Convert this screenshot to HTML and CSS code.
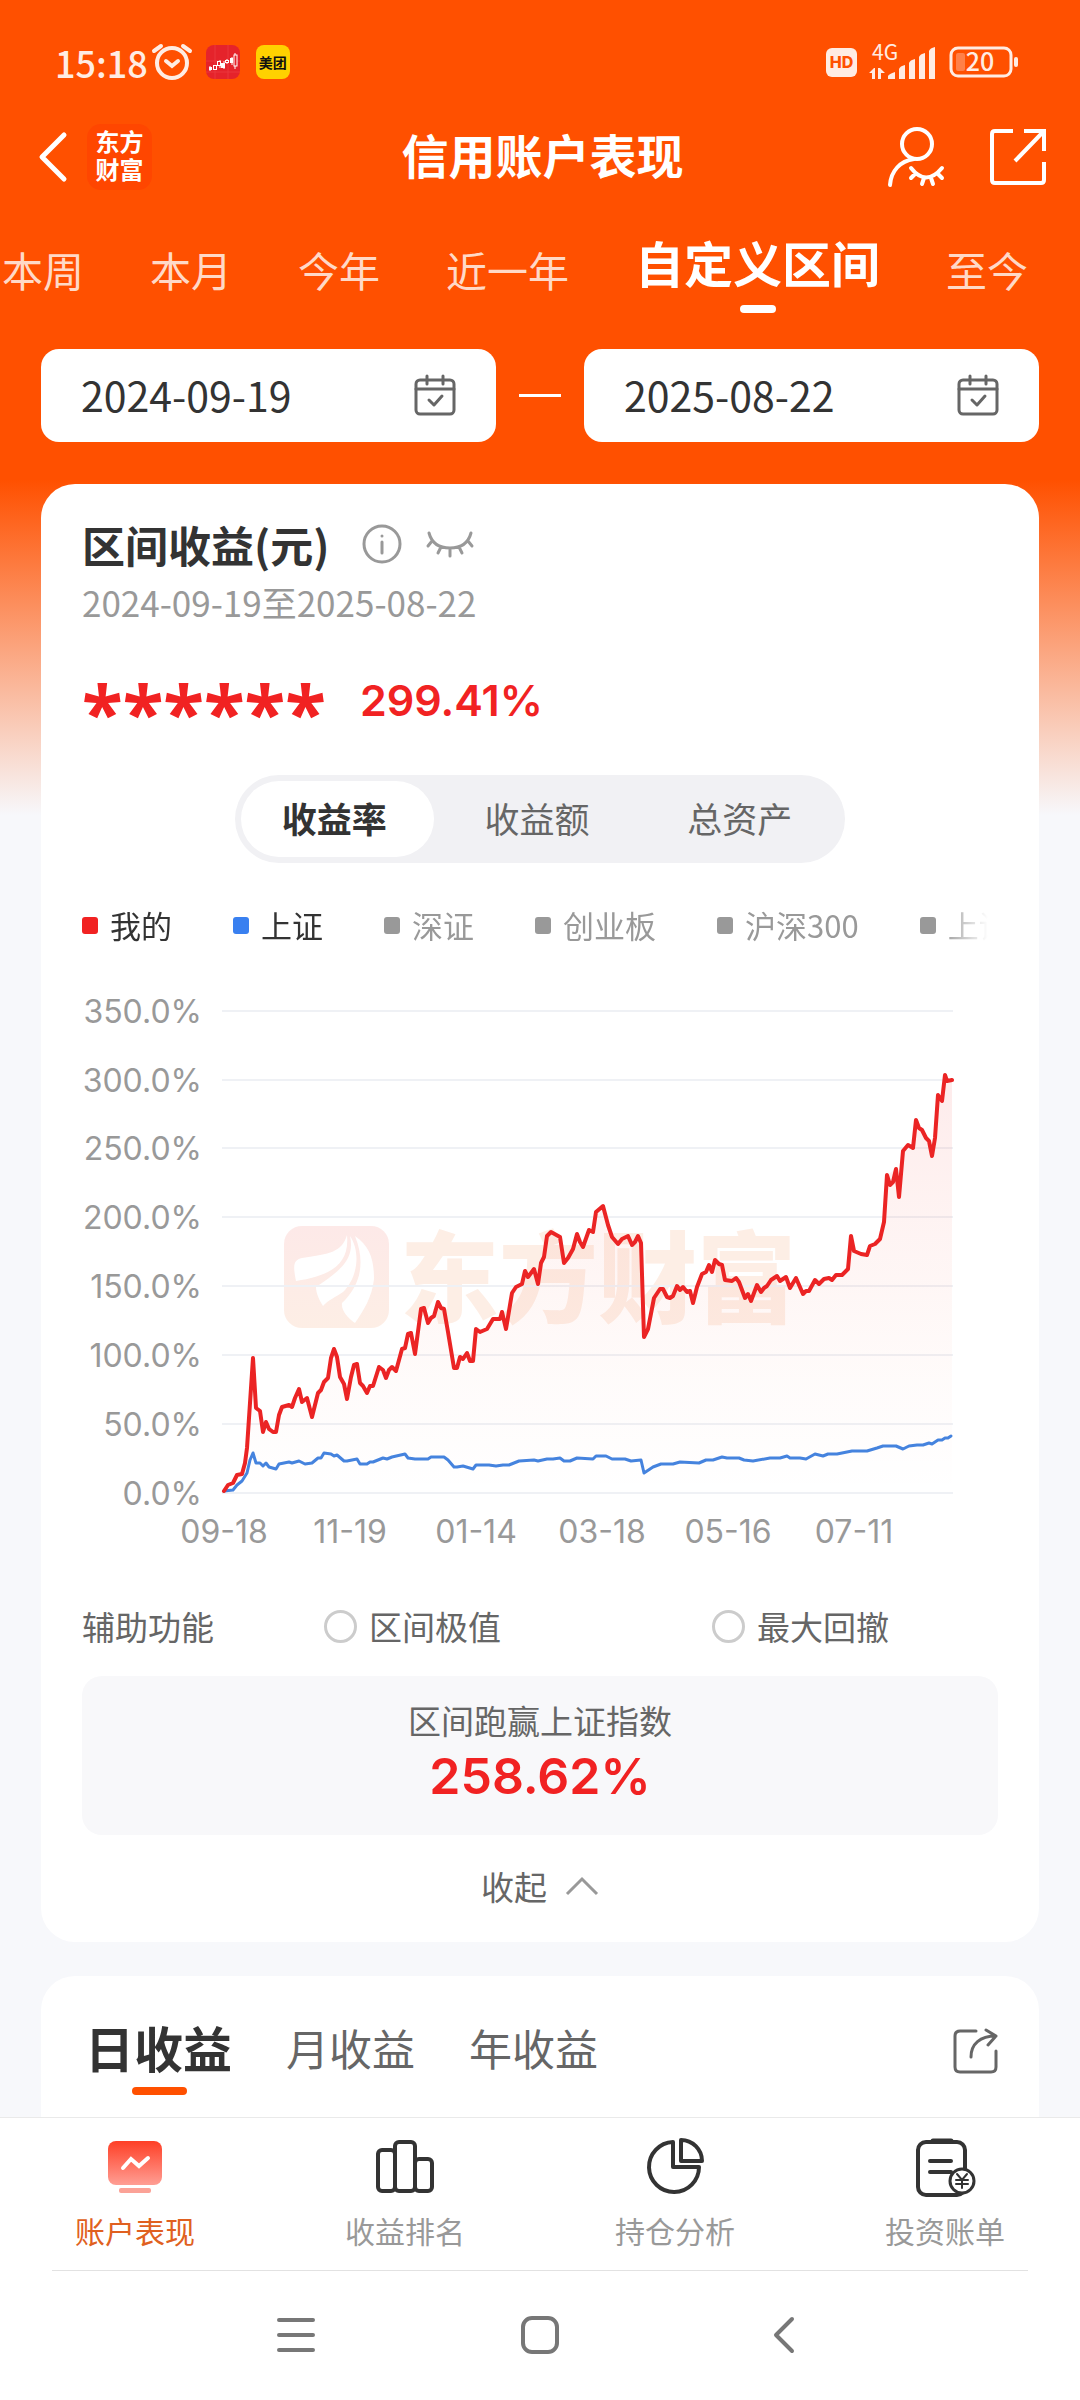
FILE: index.html
```html
<!DOCTYPE html>
<html lang="zh-CN">
<head>
<meta charset="utf-8">
<meta name="viewport" content="width=device-width, initial-scale=1">
<title>信用账户表现</title>
<link rel="stylesheet" href="styles.css">
</head>
<body>
<div class="page">
  <div class="status">
    <div class="status-group">
      <span class="clock">15:18</span>
      <svg class="alarm" width="40" height="38" viewBox="0 0 40 38" fill="none" stroke="#ffece3" stroke-width="4" stroke-linecap="round"><circle cx="20" cy="20" r="15"/><path d="M2 8l7-5M38 8l-7-5M14 18l6 5 6-5"/></svg>
      <svg class="app" width="34" height="34" viewBox="0 0 34 34"><rect width="34" height="34" rx="8" fill="#e5232b"/><path d="M9 0v34M22 0v34M0 16h34M0 27h34" stroke="#ef4a4e" stroke-width="1" opacity=".5"/><path d="M4 21v5M14 15v8M18 16v8M21 14v5M26 12v8M29 8v16" stroke="#fff"/><g fill="#fff"><rect x="3" y="22" width="3" height="3"/><rect x="15" y="18" width="4" height="5"/><rect x="24" y="13" width="3" height="5"/></g><g fill="#e5232b" stroke="#fff"><rect x="7.500" y="20.500" width="3" height="4"/><rect x="11.500" y="16.500" width="3" height="4"/><rect x="19.500" y="15.500" width="3" height="2"/><rect x="28" y="10" width="3" height="11"/></g></svg>
      <span class="meituan">美团</span>
    </div>
    <div class="status-group">
      <span class="hd">HD</span>
      <svg class="signal" width="66" height="38" viewBox="0 0 66 38" fill="#ffece3"><text x="3" y="17" class="signal-text">4G</text><path d="M0 30l5-5h1v11H3v-6zM9 36V25h2l5 5h-4v6z"/><path d="M19 33q1-2 7-4v7h-7zM30 26q1-3 6-4v14h-6zM40 20q1-3 6-4v20h-6zM50 14q1-3 6-4v26h-6zM60 8q1-3 6-4v32h-6z"/></svg>
      <svg class="battery" width="70" height="32" viewBox="0 0 70 32"><rect x="2" y="2" width="60" height="28" rx="7" fill="none" stroke="#ffece3" stroke-width="3"/><rect x="7" y="7" width="9" height="18" rx="2" fill="#ff8049"/><rect x="65" y="11" width="4" height="10" rx="2" fill="#ffece3"/><text x="31" y="25" text-anchor="middle" class="battery-text">20</text></svg>
    </div>
  </div>

  <header class="topbar">
    <div class="topbar-left">
      <button class="icon-btn" aria-label="返回"><svg width="30" height="52" viewBox="0 0 30 52" fill="none" stroke="#fff" stroke-width="5" stroke-linecap="round" stroke-linejoin="round"><path d="M26 4L4 26l22 22"/></svg></button>
      <span class="brand">东方<br>财富</span>
    </div>
    <h1 class="title">信用账户表现</h1>
    <div class="topbar-right">
      <button class="icon-btn" aria-label="账户"><svg width="60" height="60" viewBox="0 0 60 60" fill="none" stroke="#fff" stroke-width="4" stroke-linecap="round"><circle cx="31" cy="17" r="15"/><path d="M28 32C14 34 5 44 4 58"/><path d="M25 41q15 19 31 0M29 47l-4 4M38 51l-2 6M45 51l2 6M52 47l4 4" stroke-width="4"/></svg></button>
      <button class="icon-btn" aria-label="分享"><svg width="58" height="58" viewBox="0 0 58 58" fill="none" stroke="#fff" stroke-width="4"><path d="M24 3H6q-3 0-3 3v46q0 3 3 3h46q3 0 3-3V34"/><path d="M35 3h20v20M55 3L26 33"/></svg></button>
    </div>
  </header>

  <nav class="ranges" aria-label="区间">
    <button class="range">本周</button>
    <button class="range">本月</button>
    <button class="range">今年</button>
    <button class="range">近一年</button>
    <button class="range is-active">自定义区间</button>
    <button class="range">至今</button>
  </nav>

  <div class="dates">
    <label class="date"><input type="text" value="2024-09-19" readonly aria-label="开始日期"><svg width="42" height="42" viewBox="0 0 42 42" fill="none" stroke="#666" stroke-width="3" stroke-linecap="round" stroke-linejoin="round"><rect x="2" y="5" width="38" height="34" rx="4"/><path d="M2 14h38M13 1v8M29 1v8M15 25l5 5 8-9"/></svg></label>
    <span class="dates-dash"></span>
    <label class="date"><input type="text" value="2025-08-22" readonly aria-label="结束日期"><svg width="42" height="42" viewBox="0 0 42 42" fill="none" stroke="#666" stroke-width="3" stroke-linecap="round" stroke-linejoin="round"><rect x="2" y="5" width="38" height="34" rx="4"/><path d="M2 14h38M13 1v8M29 1v8M15 25l5 5 8-9"/></svg></label>
  </div>

  <main class="content">
    <section class="card">
      <div class="card-head">
        <h2 class="card-title">区间收益(元)</h2>
        <button class="icon-btn" aria-label="说明"><svg width="40" height="40" viewBox="0 0 40 40" fill="none" stroke="#999" stroke-width="3" stroke-linecap="round"><circle cx="20" cy="20" r="18"/><path d="M20 18v11M20 12v0"/></svg></button>
        <button class="icon-btn" aria-label="显示金额"><svg width="48" height="30" viewBox="0 0 48 30" fill="none" stroke="#999" stroke-width="3" stroke-linecap="round"><path d="M3 4q4 15 21 15T45 4M6 12l-4 5M42 12l4 5M15 18l-3 6M33 18l3 6M24 19v8"/></svg></button>
      </div>
      <p class="period">2024-09-19至2025-08-22</p>
      <div class="amount"><span class="masked">******</span><span class="rate">299.41%</span></div>

      <div class="switch">
        <button class="switch-item is-active">收益率</button>
        <button class="switch-item">收益额</button>
        <button class="switch-item">总资产</button>
      </div>

      <div class="legend">
        <button class="legend-item mine">我的</button>
        <button class="legend-item index">上证</button>
        <button class="legend-item">深证</button>
        <button class="legend-item">创业板</button>
        <button class="legend-item">沪深300</button>
        <button class="legend-item">上证50</button>
      </div>

      <svg class="chart" viewBox="0 0 916 560" role="img" aria-label="收益率走势">
        <defs>
          <linearGradient id="area" gradientUnits="userSpaceOnUse" x1="0" y1="85" x2="0" y2="503"><stop offset="0" stop-color="#f12222" stop-opacity=".09"/><stop offset=".75" stop-color="#f14422" stop-opacity=".02"/><stop offset="1" stop-color="#f12222" stop-opacity="0"/></linearGradient>
          <linearGradient id="mark" x1="0" y1="0" x2="0" y2="1"><stop offset="0" stop-color="#fde9e8"/><stop offset="1" stop-color="#fdeee5"/></linearGradient>
        </defs>
        <rect x="202" y="236" width="105" height="102" rx="18" fill="url(#mark)"/>
        <g fill="#fff"><path d="M265 245C260 262 248 264 220 268C211 270 211 276 214 291C246 286 268 276 265 245z"/><path d="M268 246C273 268 260 280 234 297C234 304 238 311 241 316C246 310 254 307 261 302C274 290 280 264 268 246z"/><path d="M273 246C288 256 292 270 292 289C290 308 281 321 273 333C266 328 259 321 260 313C276 298 285 276 273 246z"/></g>
        <text x="318" y="325" class="watermark">东方财富</text>
        <path class="grid" d="M140 21h731M140 90h731M140 158h731M140 227h731M140 296h731M140 365h731M140 434h731M140 503h731"/>
        <g class="axis" text-anchor="end"><text x="120" y="33">350.0%</text><text x="120" y="102">300.0%</text><text x="120" y="170">250.0%</text><text x="120" y="239">200.0%</text><text x="120" y="308">150.0%</text><text x="120" y="377">100.0%</text><text x="120" y="446">50.0%</text><text x="120" y="515">0.0%</text></g>
        <g class="axis" text-anchor="middle"><text x="142" y="553">09-18</text><text x="268" y="553">11-19</text><text x="394" y="553">01-14</text><text x="520" y="553">03-18</text><text x="646" y="553">05-16</text><text x="772" y="553">07-11</text></g>
        <path fill="url(#area)" d="M142 501L151 493L155 485L160 484L165 458L171 368L174 418L178 421L181 442L184 432L187 439L194 442L200 417L210 417L217 399L220 412L225 408L230 427L236 403L246 388L252 359L258 387L265 409L272 375L275 374L278 393L285 403L291 396L297 377L304 388L310 377L314 381L320 359L323 358L326 344L329 343L333 364L339 319L342 318L346 333L352 326L356 312L362 319L372 378L375 378L378 367L385 363L391 371L394 339L405 339L411 329L418 329L420 322L424 339L430 303L440 294L443 281L446 287L452 279L456 294L461 268L465 246L469 242L478 247L482 273L491 259L495 244L501 257L507 240L511 242L514 222L521 216L530 247L536 254L546 246L550 255L556 246L559 253L562 347L572 308L578 299L588 308L595 296L608 301L611 313L620 284L627 275L633 270L640 275L643 290L654 288L663 308L669 311L675 295L679 302L695 286L704 287L708 298L714 288L721 304L727 301L733 290L747 288L760 285L766 279L769 246L772 261L785 265L798 249L802 232L805 185L814 179L817 207L821 161L831 158L834 130L847 151L850 166L856 105L860 111L863 85L865 91L870 90V503H142z"/>
        <polyline class="line-index" points="142,501 151,500 155,495 160,491 165,483 168,470 171,463 174,473 178,473 181,476 184,473 187,477 194,479 197,474 207,472 210,473 217,471 223,474 230,473 236,468 239,468 242,463 249,464 252,466 255,465 262,471 265,471 275,469 278,474 285,474 288,472 291,472 301,468 305,469 310,467 323,464 326,468 333,469 346,469 349,467 362,467 366,470 372,477 375,477 381,476 391,479 394,475 407,475 414,476 421,475 427,475 437,471 452,470 456,471 465,469 471,469 478,468 482,471 488,471 495,468 511,469 514,466 524,466 530,469 543,469 549,471 559,470 562,483 571,477 579,474 591,474 598,472 617,473 624,470 631,470 640,467 645,468 657,468 662,470 671,471 688,468 698,468 705,466 708,468 718,468 724,469 733,464 741,466 746,464 755,464 770,461 785,461 795,458 801,456 814,456 821,459 827,456 835,455 841,455 847,453 850,454 856,450 860,450 863,448 866,448 869,446"/>
        <polyline class="line-mine" points="142,501 146,495 151,493 155,485 160,484 163,473 165,458 168,413 171,368 174,418 178,421 181,442 184,432 187,439 191,442 194,442 197,425 200,417 207,415 210,417 213,408 217,399 220,412 225,408 230,427 236,403 239,400 242,392 246,388 249,368 252,359 255,367 258,387 262,394 265,409 269,387 272,375 275,374 278,393 281,396 285,403 288,396 291,396 297,377 301,380 304,388 307,380 310,377 314,381 320,359 323,358 326,344 329,343 333,364 339,319 342,318 346,333 349,328 352,326 356,312 359,318 362,319 366,342 372,378 375,378 378,367 381,369 385,363 388,371 391,371 394,339 398,342 405,339 411,329 418,329 420,322 424,339 430,303 434,297 440,294 443,281 446,287 452,279 456,294 459,273 462,267 465,246 469,242 478,247 482,273 486,268 491,259 495,244 498,252 501,257 507,240 511,242 514,222 521,216 526,235 530,247 536,254 540,249 546,246 550,255 553,252 556,246 559,253 562,347 566,339 572,308 578,299 581,299 585,307 588,308 591,306 595,296 598,300 601,297 605,302 608,301 611,313 615,297 620,284 624,282 627,275 630,282 633,270 637,274 640,275 643,290 650,291 654,288 657,292 663,308 666,304 669,311 675,295 679,302 682,298 685,296 689,290 695,286 698,291 704,287 708,298 714,288 721,304 724,301 727,301 733,290 737,294 742,289 747,288 750,290 754,285 760,285 766,279 769,246 772,261 779,264 785,265 788,256 793,254 798,249 802,232 805,185 808,195 811,192 814,179 817,207 821,161 826,155 831,158 834,130 837,138 840,140 844,148 847,151 850,166 853,148 856,105 860,111 863,85 865,91 870,90"/>
      </svg>

      <div class="aux">
        <span>辅助功能</span>
        <label class="check"><input type="checkbox">区间极值</label>
        <label class="check"><input type="checkbox">最大回撤</label>
      </div>

      <div class="beat">
        <p class="beat-label">区间跑赢上证指数</p>
        <p class="beat-value">258.62%</p>
      </div>

      <button class="collapse">收起<svg width="34" height="20" viewBox="0 0 34 20" fill="none" stroke="#999" stroke-width="3"><path d="M2 18L17 3l15 15"/></svg></button>
    </section>

    <section class="card card-next">
      <div class="profit-tabs">
        <button class="profit is-active">日收益</button>
        <button class="profit">月收益</button>
        <button class="profit">年收益</button>
        <button class="icon-btn profit-share" aria-label="分享收益"><svg width="46" height="46" viewBox="0 0 46 46" fill="none" stroke="#666" stroke-width="3" stroke-linecap="round" stroke-linejoin="round"><path d="M24 3H8q-5 0-5 5v31q0 5 5 5h31q5 0 5-5V23"/><path d="M19 29C19 16 28 8 44 8M34 2l10 6-8 9"/></svg></button>
      </div>
    </section>
  </main>

  <nav class="tabbar" aria-label="主导航">
    <a class="tab is-active" href="#account"><svg width="60" height="60" viewBox="0 0 60 60"><defs><linearGradient id="tv" x1="0" y1="0" x2="0" y2="1"><stop offset="0" stop-color="#fe3f26"/><stop offset="1" stop-color="#ff9e94"/></linearGradient></defs><rect x="3" y="3" width="54" height="44" rx="8" fill="url(#tv)"/><rect x="14" y="50" width="32" height="5" rx="2" fill="#fba297"/><path d="M18 30l8-9 8 7 9-8" fill="none" stroke="#fff" stroke-width="4" stroke-linecap="round"/></svg>账户表现</a>
    <a class="tab" href="#rank"><svg width="60" height="60" viewBox="0 0 60 60" fill="none" stroke="#333" stroke-width="4"><rect x="3" y="12" width="17" height="41" rx="4"/><rect x="20" y="4" width="20" height="49" rx="4"/><rect x="40" y="21" width="17" height="32" rx="4"/></svg>收益排名</a>
    <a class="tab" href="#position"><svg width="60" height="60" viewBox="0 0 60 60" fill="none" stroke="#333" stroke-width="4" stroke-linejoin="round"><path d="M28 4A25 25 0 1 0 54 29H28z"/><path d="M36 2v21h21A21 21 0 0 0 36 2z"/></svg>持仓分析</a>
    <a class="tab" href="#bill"><svg width="60" height="60" viewBox="0 0 60 60" fill="none" stroke="#333" stroke-width="4" stroke-linecap="round"><rect x="3" y="4" width="47" height="53" rx="8"/><path d="M18 3h18" stroke-width="5"/><path d="M15 23h21M15 34h21"/><circle cx="47" cy="43" r="12" fill="#fff" stroke-width="3"/><path d="M42 36l5 6 5-6M47 42v8M41 42h12M41 46h12" stroke-width="2"/></svg>投资账单</a>
  </nav>
  <div class="sysnav">
    <button class="icon-btn" aria-label="最近任务"><svg width="40" height="40" viewBox="0 0 40 40" stroke="#777" stroke-width="4" stroke-linecap="round"><path d="M3 5h34M3 20h34M3 35h34"/></svg></button>
    <button class="icon-btn" aria-label="主屏幕"><svg width="40" height="40" viewBox="0 0 40 40" fill="none" stroke="#777" stroke-width="4"><rect x="3" y="3" width="34" height="34" rx="9"/></svg></button>
    <button class="icon-btn" aria-label="返回上一页"><svg width="40" height="40" viewBox="0 0 40 40" fill="none" stroke="#777" stroke-width="4" stroke-linecap="round" stroke-linejoin="round"><path d="M28 4L12 20l16 16"/></svg></button>
  </div>
</div>
</body>
</html>
```

FILE: styles.css
```css
* {
  box-sizing: border-box;
}

body,
h1,
h2,
p {
  margin: 0;
}

body {
  background: #f7f8fb;
  color: #333;
  font-family: "Noto Sans CJK SC", sans-serif;
  font-size: 33px;
}

button,
input {
  padding: 0;
  border: 0;
  background: none;
  color: inherit;
  font: inherit;
}

svg {
  display: block;
  flex: none;
  overflow: visible;
}

.page {
  display: flex;
  flex-direction: column;
  min-height: 100vh;
  background: linear-gradient(#ff5000 0, #ff5000 480px, #f7f8fb 815px);
}

.icon-btn {
  display: flex;
  align-items: center;
  justify-content: center;
}

/* Status bar */
.status {
  display: flex;
  justify-content: space-between;
  height: 100px;
  padding: 24px 61px 0 55px;
  color: #ffece3;
}

.status-group {
  display: flex;
  align-items: center;
}

.clock {
  font-size: 36px;
  font-weight: 500;
}

.alarm {
  margin-left: 4px;
}

.app {
  margin: 0 16px 0 14px;
}

.meituan {
  width: 34px;
  border-radius: 8px;
  background: #ffd100;
  color: #111;
  font-size: 14px;
  font-weight: 700;
  line-height: 34px;
  text-align: center;
}

.hd {
  width: 31px;
  border-radius: 6px;
  background: #ffece3;
  color: #ff5000;
  font: 800 16px/29px Inter, sans-serif;
  text-align: center;
}

.signal {
  margin: 0 14px 0 12px;
}

.signal-text {
  font-size: 21px;
}

.battery-text {
  fill: #ffece3;
  font-size: 25px;
  font-weight: 500;
}

/* Title bar */
.topbar {
  display: grid;
  grid-template-columns: 1fr auto 1fr;
  align-items: center;
  height: 114px;
  padding: 0 33px 0 38px;
}

.topbar-left,
.topbar-right {
  display: flex;
  align-items: center;
  gap: 19px;
}

.topbar-right {
  justify-content: flex-end;
  gap: 43px;
}

.brand {
  width: 65px;
  padding: 3px 0 7px;
  border-radius: 14px;
  background: #ff4600;
  color: #fff;
  font-size: 24px;
  font-weight: 700;
  line-height: 28px;
  text-align: center;
}

.title {
  padding-bottom: 6px;
  color: #fff;
  font-size: 47px;
  font-weight: 700;
  line-height: 60px;
}

/* Range tabs */
.ranges {
  display: flex;
  align-items: center;
  gap: 66px;
  height: 110px;
  padding-left: 2px;
  overflow: hidden;
}

.range {
  flex: none;
  color: #ffd9c7;
  font-size: 41px;
  line-height: 56px;
}

.range.is-active {
  position: relative;
  padding-bottom: 14px;
  color: #fff;
  font-size: 49px;
  font-weight: 700;
}

.range.is-active::after {
  content: "";
  position: absolute;
  bottom: -9px;
  left: 50%;
  width: 36px;
  height: 8px;
  margin-left: -18px;
  border-radius: 4px;
  background: #fff;
}

/* Date pickers */
.dates {
  display: flex;
  align-items: center;
  justify-content: space-between;
  gap: 23px;
  padding: 25px 41px 42px;
}

.date {
  display: flex;
  flex: 1;
  align-items: center;
  justify-content: space-between;
  min-width: 0;
  height: 93px;
  padding: 0 40px;
  border-radius: 18px;
  background: #fff;
}

.date input {
  flex: 1;
  min-width: 0;
  padding-bottom: 4px;
  font-size: 41px;
  line-height: 56px;
}

.dates-dash {
  width: 42px;
  height: 3px;
  background: #fff;
}

/* Cards */
.content {
  display: flex;
  flex: 1;
  flex-direction: column;
  gap: 34px;
  padding: 0 41px;
}

.card {
  padding: 32px 41px;
  border-radius: 34px;
  background: #fff;
}

.card-head {
  display: flex;
  align-items: center;
  gap: 24px;
}

.card-title {
  margin-right: 8px;
  font-size: 43px;
  font-weight: 700;
  line-height: 56px;
}

.period {
  margin-top: 8px;
  color: #999;
  font-size: 35px;
  line-height: 44px;
}

.amount {
  display: flex;
  align-items: center;
  gap: 34px;
  height: 60px;
  margin-top: 46px;
  color: #f12222;
  font-weight: 600;
}

.masked {
  padding-top: 22px;
  font-family: "Noto Sans", sans-serif;
  font-size: 75px;
  font-weight: 700;
  line-height: 60px;
}

.rate {
  font-family: Inter, sans-serif;
  font-size: 43px;
}

.switch {
  display: flex;
  gap: 10px;
  width: 610px;
  max-width: 100%;
  margin: 45px auto 0;
  padding: 6px;
  border-radius: 44px;
  background: #f1f1f4;
}

.switch-item {
  flex: 1;
  padding: 0 6px 2px 0;
  border-radius: 38px;
  color: #666;
  font-size: 35px;
  line-height: 74px;
}

.switch-item.is-active {
  background: #fff;
  color: #333;
  font-weight: 700;
}

.legend {
  display: flex;
  gap: 61px;
  margin: 40px 0 43px;
  overflow: hidden;
  -webkit-mask-image: linear-gradient(90deg, #000 860px, transparent 906px);
  mask-image: linear-gradient(90deg, #000 860px, transparent 906px);
}

.legend-item {
  display: flex;
  flex: none;
  align-items: center;
  gap: 12px;
  color: #999;
  font-size: 31px;
  line-height: 44px;
}

.legend-item::before {
  content: "";
  width: 16px;
  height: 17px;
  border-radius: 3px;
  background: #999;
}

.legend-item.mine,
.legend-item.index {
  color: #333;
}

.legend-item.mine::before {
  background: #f12222;
}

.legend-item.index::before {
  background: #3980f0;
}

/* Chart */
.chart {
  width: 100%;
}

.grid {
  fill: none;
  stroke: #eff1f5;
  stroke-width: 2;
}

.axis {
  fill: #999;
  font-family: Inter, sans-serif;
  font-size: 32px;
}

.watermark {
  fill: #fdeee5;
  font-size: 99px;
  font-weight: 900;
}

.line-mine,
.line-index {
  fill: none;
  stroke: #eb2424;
  stroke-width: 4;
  stroke-linejoin: round;
  stroke-linecap: round;
}

.line-index {
  stroke: #4583de;
  stroke-width: 3;
}

/* Helper toggles */
.aux {
  display: grid;
  grid-template-columns: 242fr 388fr 286fr;
  margin: 52px 0 26px;
  color: #666;
  line-height: 48px;
}

.check {
  display: flex;
  align-items: center;
  gap: 12px;
}

.check input {
  width: 33px;
  height: 33px;
  margin: 0;
  border: 3px solid #ccc;
  border-radius: 50%;
  appearance: none;
}

.check input:checked {
  border-color: #ff5000;
  background: #ff5000;
}

.beat {
  padding: 22px 20px 29px;
  border-radius: 20px;
  background: #f8f8fa;
  text-align: center;
}

.beat-label {
  color: #666;
  line-height: 44px;
}

.beat-value {
  margin-top: 4px;
  color: #f12222;
  font: 600 50px/60px Inter, sans-serif;
}

.collapse {
  display: flex;
  align-items: center;
  gap: 18px;
  margin: 27px auto 0;
  color: #666;
  line-height: 48px;
}

.card-next {
  flex: 1;
  padding-bottom: 0;
  border-radius: 34px 34px 0 0;
}

.profit-tabs {
  display: flex;
  align-items: center;
  gap: 54px;
  height: 86px;
  padding-left: 3px;
}

.profit {
  padding-bottom: 8px;
  color: #666;
  font-size: 43px;
  line-height: 60px;
}

.profit.is-active {
  position: relative;
  color: #333;
  font-size: 49px;
  font-weight: 700;
}

.profit.is-active::after {
  content: "";
  position: absolute;
  bottom: -10px;
  left: 50%;
  width: 55px;
  height: 8px;
  margin-left: -27px;
  border-radius: 4px;
  background: #ff5000;
}

.profit-share {
  margin-left: auto;
}

/* Bottom navigation */
.tabbar {
  display: grid;
  grid-template-columns: repeat(4, 1fr);
  padding: 20px 0 18px;
  border-top: 1px solid #eaeaea;
  background: #fff;
}

.tab {
  display: flex;
  flex-direction: column;
  align-items: center;
  gap: 10px;
  color: #999;
  font-size: 30px;
  line-height: 44px;
  text-decoration: none;
}

.tab.is-active {
  color: #e06020;
}

.sysnav {
  display: flex;
  align-items: center;
  justify-content: center;
  gap: 204px;
  height: 130px;
  background: linear-gradient(#e2e2e2, #e2e2e2) center top / calc(100% - 104px) 1px no-repeat #fff;
}
```
